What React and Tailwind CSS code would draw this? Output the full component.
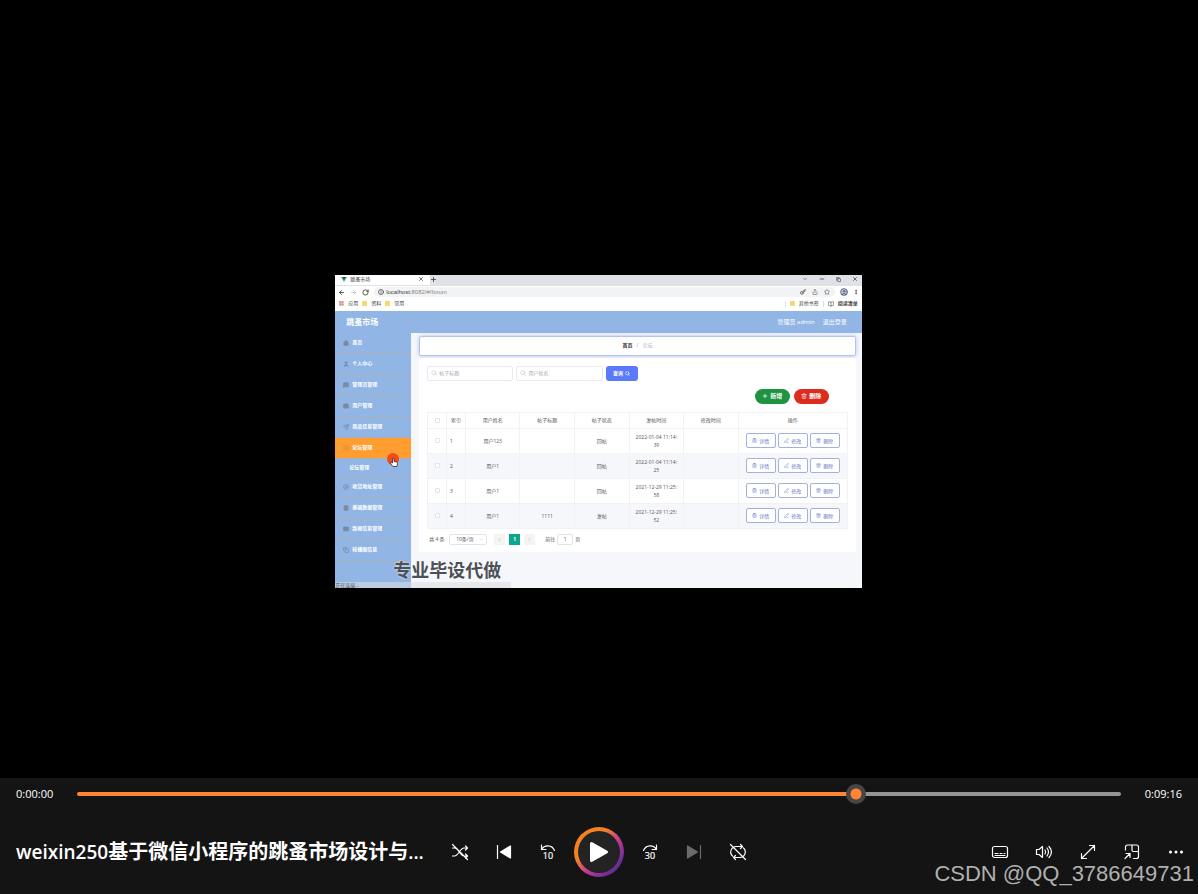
import { useState } from "react";
import {
  ArrowLeft,
  ArrowRight,
  BookOpen,
  Briefcase,
  ChevronDown,
  ChevronLeft,
  ChevronRight,
  CircleUser,
  ClipboardList,
  Compass,
  Copy,
  EllipsisVertical,
  House,
  Info,
  Key,
  LayoutGrid,
  Mail,
  MessageSquare,
  Minus,
  PenLine,
  Plus,
  RotateCw,
  Search,
  Send,
  Share,
  Smile,
  Star,
  Trash2,
  User,
  X,
} from "lucide-react";

const menu = [
  { label: "首页", icon: House, leaf: true, solid: true },
  { label: "个人中心", icon: User, solid: true },
  { label: "管理员管理", icon: MessageSquare, solid: true },
  { label: "用户管理", icon: Briefcase, solid: true },
  { label: "商品信息管理", icon: Send },
  { label: "论坛管理", icon: Smile, active: true, children: ["论坛管理"] },
  { label: "收货地址管理", icon: Compass },
  { label: "基础数据管理", icon: ClipboardList, solid: true },
  { label: "新闻信息管理", icon: Mail, solid: true },
  { label: "轮播图信息", icon: Copy },
];

const rows = [
  { id: 1, user: "用户123", title: "", state: "回帖", date: "2022-01-04 11:14:", sec: "39" },
  { id: 2, user: "用户1", title: "", state: "回帖", date: "2022-01-04 11:14:", sec: "25" },
  { id: 3, user: "用户1", title: "", state: "回帖", date: "2021-12-29 11:25:", sec: "58" },
  { id: 4, user: "用户1", title: "1111", state: "发帖", date: "2021-12-29 11:25:", sec: "52" },
];

const columns = ["索引", "用户姓名", "帖子标题", "帖子状态", "发帖时间", "修改时间", "操作"];

const Folder = () => <span className="block h-[5px] w-[5px] rounded-[1px] bg-[#f7d774]" />;

const BrowserChrome = () => (
  <div className="text-[5px] leading-none text-[#444]">
    <div className="flex h-[11px] items-center bg-[#dee1e6] pb-[2px]">
      <div className="flex h-[11px] w-[18%] items-center bg-white pl-[6px] pr-[6px]">
        <svg viewBox="0 0 12 10" className="mr-[3px] h-[5px] w-[6px]">
          <path d="M0 0h12L6 10z" fill="#41b883" />
          <path d="M2.5 0h7L6 6z" fill="#2c4a55" />
        </svg>
        <span>跳蚤市场</span>
        <X className="ml-auto h-[6px] w-[6px]" strokeWidth={3} />
      </div>
      <Plus className="h-[7px] w-[7px]" strokeWidth={3} />
      <div className="ml-auto flex items-center gap-[11px] pr-[4px]">
        <ChevronDown className="h-[6px] w-[6px]" />
        <Minus className="h-[6px] w-[6px]" strokeWidth={3} />
        <Copy className="h-[5px] w-[5px]" strokeWidth={3} />
        <X className="h-[6px] w-[6px]" strokeWidth={3} />
      </div>
    </div>
    <div className="flex h-[13px] items-center gap-[5px] bg-white px-[3px]">
      <ArrowLeft className="h-[7px] w-[7px]" strokeWidth={3} />
      <ArrowRight className="h-[7px] w-[7px] text-[#aaa]" />
      <RotateCw className="h-[7px] w-[7px]" strokeWidth={3} />
      <div className="flex h-[10px] flex-1 items-center rounded-full bg-[#f1f3f4] pl-[4px] pr-[5px]">
        <Info className="mr-[2px] h-[6px] w-[6px]" strokeWidth={3} />
        <span className="font-['Liberation_Sans',sans-serif] text-[6px]">
          localhost:<span className="text-[#888]">8082/#/forum</span>
        </span>
        <div className="ml-auto flex items-center gap-[6px]">
          <Key className="h-[6px] w-[6px]" strokeWidth={3} />
          <Share className="h-[6px] w-[6px]" />
          <Star className="h-[6px] w-[6px]" />
        </div>
      </div>
      <CircleUser className="h-[8px] w-[8px] rounded-full bg-[#ccd3e2] text-[#34466a]" />
      <EllipsisVertical className="h-[6px] w-[6px]" strokeWidth={3} />
    </div>
    <div className="flex h-[12px] items-center gap-[4px] bg-white px-[4px] pb-[2px]">
      <LayoutGrid className="h-[5px] w-[5px] text-[#c66]" strokeWidth={3} />
      <span>应用</span>
      <Folder />
      <span>资料</span>
      <Folder />
      <span>常用</span>
      <span className="ml-auto h-[6px] border-l border-[#ddd]" />
      <Folder />
      <span>其他书签</span>
      <span className="h-[6px] border-l border-[#ddd]" />
      <BookOpen className="h-[6px] w-[6px]" />
      <span className="font-bold">阅读清单</span>
    </div>
  </div>
);

const Sidebar = () => (
  <nav className="w-[76px] shrink-0 bg-[#91b5e4] text-[5px] font-bold leading-none text-white">
    {menu.map(({ label, icon: Icon, leaf, active, solid, children }) => (
      <div key={label}>
        <a
          href="#menu"
          className={`flex h-[21px] items-center border-b border-[#a9b1bd] pl-[8px] pr-[6px] ${active ? "bg-[#ff9d30]" : ""}`}
        >
          <Icon
            className={`mr-[3px] h-[6px] w-[6px] ${active ? "text-[#c9924f]" : "text-[#7d8b9f]"}`}
            fill={solid ? "currentColor" : "none"}
            strokeWidth={3}
          />
          <span>{label}</span>
          {!leaf && !active && <ChevronDown className="ml-auto h-[5px] w-[5px] text-[#c3b5c8]" />}
        </a>
        {children?.map((child) => (
          <a key={child} href="#forum" className="flex h-[18px] items-center border-b border-[#a9b1bd] pl-[14px]">
            {child}
          </a>
        ))}
      </div>
    ))}
  </nav>
);

const SearchBox = ({ label }) => (
  <label className="flex h-[15px] w-[20.5%] items-center rounded-[2px] border border-[#e8eaef] bg-white pl-[3px]">
    <Search className="mr-[2px] h-[6px] w-[6px] shrink-0 text-[#b5b9c2]" />
    <input
      type="text"
      aria-label={label}
      placeholder={label}
      className="w-full min-w-0 text-[5px] leading-none outline-none placeholder:text-[#a6a9b0]"
    />
  </label>
);

const RowButton = ({ icon: Icon, children }) => (
  <button className="flex h-[15px] w-[30px] items-center justify-center gap-[2px] rounded-[2px] border border-[#a5b1dc] bg-white text-[#6379c4]">
    <Icon className="h-[5px] w-[5px]" />
    {children}
  </button>
);

const Tick = ({ label }) => (
  <input
    type="checkbox"
    aria-label={label}
    className="mx-auto block h-[5px] w-[5px] appearance-none rounded-[1px] border border-[#e0e3e9] bg-white"
  />
);

const ForumTable = () => (
  <table className="w-full table-fixed border-collapse text-center text-[5px] leading-[8px] text-[#555]">
    <colgroup>
      <col className="w-[4.5%]" />
      <col className="w-[4.5%]" />
      <col className="w-[13%]" />
      <col className="w-[13%]" />
      <col className="w-[13%]" />
      <col className="w-[13%]" />
      <col className="w-[13%]" />
      <col className="w-[26%]" />
    </colgroup>
    <thead>
      <tr className="h-[16px]">
        <th className="border border-[#f0f2f6]"><Tick label="全选" /></th>
        {columns.map((name) => (
          <th key={name} className="border border-[#f0f2f6] font-normal">{name}</th>
        ))}
      </tr>
    </thead>
    <tbody>
      {rows.map((row) => (
        <tr key={row.id} className="h-[25px] even:bg-[#f5f7fb]">
          <td className="border border-[#f0f2f6]"><Tick label={`选择 ${row.id}`} /></td>
          <td className="border border-[#f0f2f6] pl-[3px] text-left">{row.id}</td>
          <td className="border border-[#f0f2f6]">{row.user}</td>
          <td className="border border-[#f0f2f6]">{row.title}</td>
          <td className="border border-[#f0f2f6]">{row.state}</td>
          <td className="border border-[#f0f2f6]">{row.date}<br />{row.sec}</td>
          <td className="border border-[#f0f2f6]" />
          <td className="border border-[#f0f2f6]">
            <div className="flex justify-center gap-[2px]">
              <RowButton icon={ClipboardList}>详情</RowButton>
              <RowButton icon={PenLine}>修改</RowButton>
              <RowButton icon={Trash2}>删除</RowButton>
            </div>
          </td>
        </tr>
      ))}
    </tbody>
  </table>
);

const Pagination = () => (
  <div className="mt-[5px] flex h-[11px] items-center text-[5px] leading-none text-[#555]">
    <span className="ml-[2px] w-[20px]">共 4 条</span>
    <label className="flex h-full w-[38px] items-center rounded-[2px] border border-[#e0e3e9] pl-[6px] pr-[2px]">
      <select aria-label="每页条数" className="w-full appearance-none text-[5px] leading-none outline-none">
        <option>10条/页</option>
      </select>
      <ChevronDown className="h-[5px] w-[5px] shrink-0 text-[#b5b9c2]" />
    </label>
    <button aria-label="上一页" className="ml-[7px] flex h-full w-[11px] items-center justify-center bg-[#f4f4f5]">
      <ChevronLeft className="h-[5px] w-[5px] text-[#aaa]" />
    </button>
    <button className="ml-[4px] h-full w-[11px] bg-[#0aa78c] font-bold text-white">1</button>
    <button aria-label="下一页" className="ml-[4px] flex h-full w-[11px] items-center justify-center bg-[#f4f4f5]">
      <ChevronRight className="h-[5px] w-[5px] text-[#aaa]" />
    </button>
    <label className="ml-[10px] flex h-full items-center gap-[2px]">
      前往
      <input defaultValue="1" className="h-full w-[16px] rounded-[2px] border border-[#e0e3e9] text-center outline-none" />
      页
    </label>
  </div>
);

const VideoFrame = () => (
  <div className="relative w-[44%] overflow-hidden bg-[#f6f7fb]">
    <BrowserChrome />
    <header className="flex h-[22px] items-center bg-[#91b5e4] pl-[11px] pr-[15px] leading-none text-white">
      <h1 className="text-[8px] font-bold">跳蚤市场</h1>
      <span className="ml-auto text-[6px]">管理员 admin</span>
      <a href="#logout" className="ml-[8px] text-[6px]">退出登录</a>
    </header>
    <div className="flex">
      <Sidebar />
      <main className="flex min-w-0 flex-1 flex-col pl-[8px] pr-[6px] pt-[3px]">
        <div className="flex h-[20px] items-center justify-center gap-[4px] rounded-[2px] border border-[#b4c3ee] bg-white text-[5px] leading-none text-[#999] shadow-[0_0_4px_#b4c3ee]">
          <span className="font-bold text-[#333]">首页</span>/<span className="text-[#b5b9c2]">论坛</span>
        </div>
        <div className="mt-[2px] bg-white px-[8px] pb-[7px] pt-[8px]">
          <form className="flex items-center gap-[3px]" onSubmit={(e) => e.preventDefault()}>
            <SearchBox label="帖子标题" />
            <SearchBox label="用户姓名" />
            <button className="flex h-[15px] w-[32px] items-center justify-center gap-[2px] rounded-[3px] bg-[#5b79fb] text-[5px] font-bold leading-none text-white">
              查询 <Search className="h-[5px] w-[5px]" strokeWidth={3} />
            </button>
          </form>
          <div className="mb-[8px] mt-[8px] flex justify-end gap-[4px] pr-[19px] text-[6px] font-bold leading-none text-white">
            <button className="flex h-[15px] w-[35px] items-center justify-center gap-[2px] rounded-full bg-[#1e9440]">
              <Plus className="h-[6px] w-[6px]" strokeWidth={3} />新增
            </button>
            <button className="flex h-[15px] w-[35px] items-center justify-center gap-[2px] rounded-full bg-[#dc2c1d]">
              <Trash2 className="h-[6px] w-[6px]" />删除
            </button>
          </div>
          <ForumTable />
          <Pagination />
        </div>
        <div className="h-[36px]" />
      </main>
    </div>
    <div className="absolute bottom-0 left-0 flex h-[6px] w-1/3 bg-[#e6e8ec]">
      <span className="w-[76px] bg-[#bccbe0] text-[5px] leading-[6px] text-[#555]">正在连接...</span>
    </div>
    <p className="absolute bottom-[8px] left-[58px] text-[18px] font-bold leading-5 text-[#4c4f55] [text-shadow:0_0_2px_#fff]">
      专业毕设代做
    </p>
    <div className="absolute left-[52px] top-[178px] h-[12px] w-[12px] rounded-full bg-[#f04a1d]">
      <svg viewBox="0 0 16 18" className="absolute left-[3px] top-[5px] h-[9px] w-[8px]">
        <path d="M5 10V2a1.5 1.5 0 0 1 3 0v5l5 1c2 .4 2.4 1.5 2 3l-1 6H6L1 11c-.8-1.5 1-2.5 2-1.5z" fill="#fff" stroke="#222" strokeWidth="1.5" />
      </svg>
    </div>
  </div>
);

const Glyph = ({ children }) => (
  <svg viewBox="0 0 16 16" fill="none" stroke="currentColor" strokeWidth="1.2" strokeLinecap="round" strokeLinejoin="round" className="h-4 w-4 overflow-visible">
    {children}
  </svg>
);

const PlayerButton = ({ label, dim, children }) => (
  <button aria-label={label} className={`flex h-11 w-11 items-center justify-center ${dim ? "text-[#6b6b6b]" : "text-white"}`}>
    <Glyph>{children}</Glyph>
  </button>
);

const SeekBar = () => {
  const [value, setValue] = useState(751);
  const fill = `calc(10px + (100% - 20px) * ${value / 1000})`;

  return (
    <div className="flex h-8 items-center text-[11px] text-white">
      <span className="w-[77px] pl-4">0:00:00</span>
      <input
        type="range"
        aria-label="播放进度"
        min="0"
        max="1000"
        value={value}
        onChange={(e) => setValue(Number(e.target.value))}
        style={{ "--fill": fill }}
        className="h-5 min-w-0 flex-1 appearance-none bg-transparent [&::-webkit-slider-runnable-track]:h-1 [&::-webkit-slider-runnable-track]:rounded-full [&::-webkit-slider-runnable-track]:bg-[linear-gradient(to_right,#ff8534_var(--fill),#959595_var(--fill))] [&::-webkit-slider-thumb]:-mt-2 [&::-webkit-slider-thumb]:h-5 [&::-webkit-slider-thumb]:w-5 [&::-webkit-slider-thumb]:appearance-none [&::-webkit-slider-thumb]:rounded-full [&::-webkit-slider-thumb]:bg-[radial-gradient(circle,#ff8534_5px,#454545_6px)]"
      />
      <span className="w-[77px] pr-4 text-right">0:09:16</span>
    </div>
  );
};

const PlayerBar = () => (
  <footer className="relative bg-[#141414]">
    <SeekBar />
    <div className="grid h-[84px] grid-cols-[1fr_auto_1fr] items-center">
      <h2 className="truncate pl-4 text-[19px] font-semibold leading-8 text-white">
        weixin250<span className="text-[20px] font-bold">基于微信小程序的跳蚤市场设计与</span>...
      </h2>
      <div className="flex items-center">
        <PlayerButton label="随机播放">
          <path d="M.5 12h2C6.500 12 8 4 12 4h3.500M.5 4h2C6.500 4 8 12 12 12h3.500M13.500 2l2 2-2 2M13.500 10l2 2-2 2M.5.5l15 15" />
        </PlayerButton>
        <PlayerButton label="上一个">
          <path d="M1.5 1.5v13" />
          <path d="M4.5 8 14.5 2v12z" fill="currentColor" />
        </PlayerButton>
        <PlayerButton label="后退 10 秒">
          <path d="M1.5 1v4.500H6M1.500 5.500C4.500.5 12 .5 14.500 6.500" />
          <text x="8" y="15" textAnchor="middle" fontSize="9" fill="currentColor" stroke="currentColor" strokeWidth=".2">10</text>
        </PlayerButton>
        <button aria-label="播放" className="mx-1 flex h-[50px] w-[50px] items-center justify-center rounded-full bg-[linear-gradient(135deg,#f58220_35%,#c2379a_58%,#5c2d91_85%)] p-[4px] text-white">
          <span className="flex h-full w-full items-center justify-center rounded-full bg-[#232323]">
            <svg viewBox="0 0 20 22" className="h-[22px] w-5">
              <path d="M2.5 2.500v17L17.500 11z" fill="currentColor" stroke="currentColor" strokeWidth="3" strokeLinejoin="round" />
            </svg>
          </span>
        </button>
        <PlayerButton label="前进 30 秒">
          <path d="M14.5 1v4.500H10M14.500 5.500C11.500.5 4 .5 1.500 6.500" />
          <text x="8" y="15" textAnchor="middle" fontSize="9" fill="currentColor" stroke="currentColor" strokeWidth=".2">30</text>
        </PlayerButton>
        <PlayerButton label="下一个" dim>
          <path d="M14.5 1.5v13" />
          <path d="M11.5 8 1.5 2v12z" fill="currentColor" />
        </PlayerButton>
        <PlayerButton label="重复播放">
          <path d="M10.500.5l2 2-2 2M12.500 2.500H6.500A5.500 5.500 0 0 0 2.500 12M5.500 15.500l-2-2 2-2M3.500 13.500h6A5.500 5.500 0 0 0 13.500 4M.5.5l15 15" />
        </PlayerButton>
      </div>
      <div className="flex items-center justify-end">
        <PlayerButton label="字幕">
          <rect x=".5" y="2.5" width="15" height="11" rx="2" />
          <path d="M3 9.500h3M8 9.500h2M12 9.500h1M3 11.500h10" strokeWidth="1" />
        </PlayerButton>
        <PlayerButton label="音量">
          <path d="M.5 5.500h2.500L6.500 2.500v11L3 10.500H.5zM9 6c.8 1.200.8 2.800 0 4M11 4c1.800 2.400 1.800 5.600 0 8M13 2.500c3 3.400 3 7.600 0 11" />
        </PlayerButton>
        <PlayerButton label="全屏">
          <path d="M1.500 14.500l13-13M9.500 1.500h5v5M1.500 9.500v5h5" />
        </PlayerButton>
        <PlayerButton label="迷你播放器">
          <path d="M1.500 6V3a2 2 0 0 1 2-2h9a2 2 0 0 1 2 2v9.500a2 2 0 0 1-2 2H9.500M8 1v5a1.500 1.500 0 0 0 1.500 1.500h5M1 14.500l5-5M2 9.500h4v4" />
        </PlayerButton>
        <PlayerButton label="更多">
          <path d="M2.500 8h.01M8 8h.01M13.500 8h.01" strokeWidth="3" />
        </PlayerButton>
      </div>
    </div>
    <p className="pointer-events-none absolute bottom-1 right-1 font-['Liberation_Sans',sans-serif] text-[22px] leading-8 text-[#b0b0b0]">
      CSDN @QQ_3786649731
    </p>
  </footer>
);

const App = () => (
  <div className="flex min-h-screen flex-col bg-black font-['Open_Sans','Noto_Sans_CJK_SC',sans-serif]">
    <div className="flex flex-1 items-center justify-center pr-px pt-[84px]">
      <VideoFrame />
    </div>
    <PlayerBar />
  </div>
);

export default App;
